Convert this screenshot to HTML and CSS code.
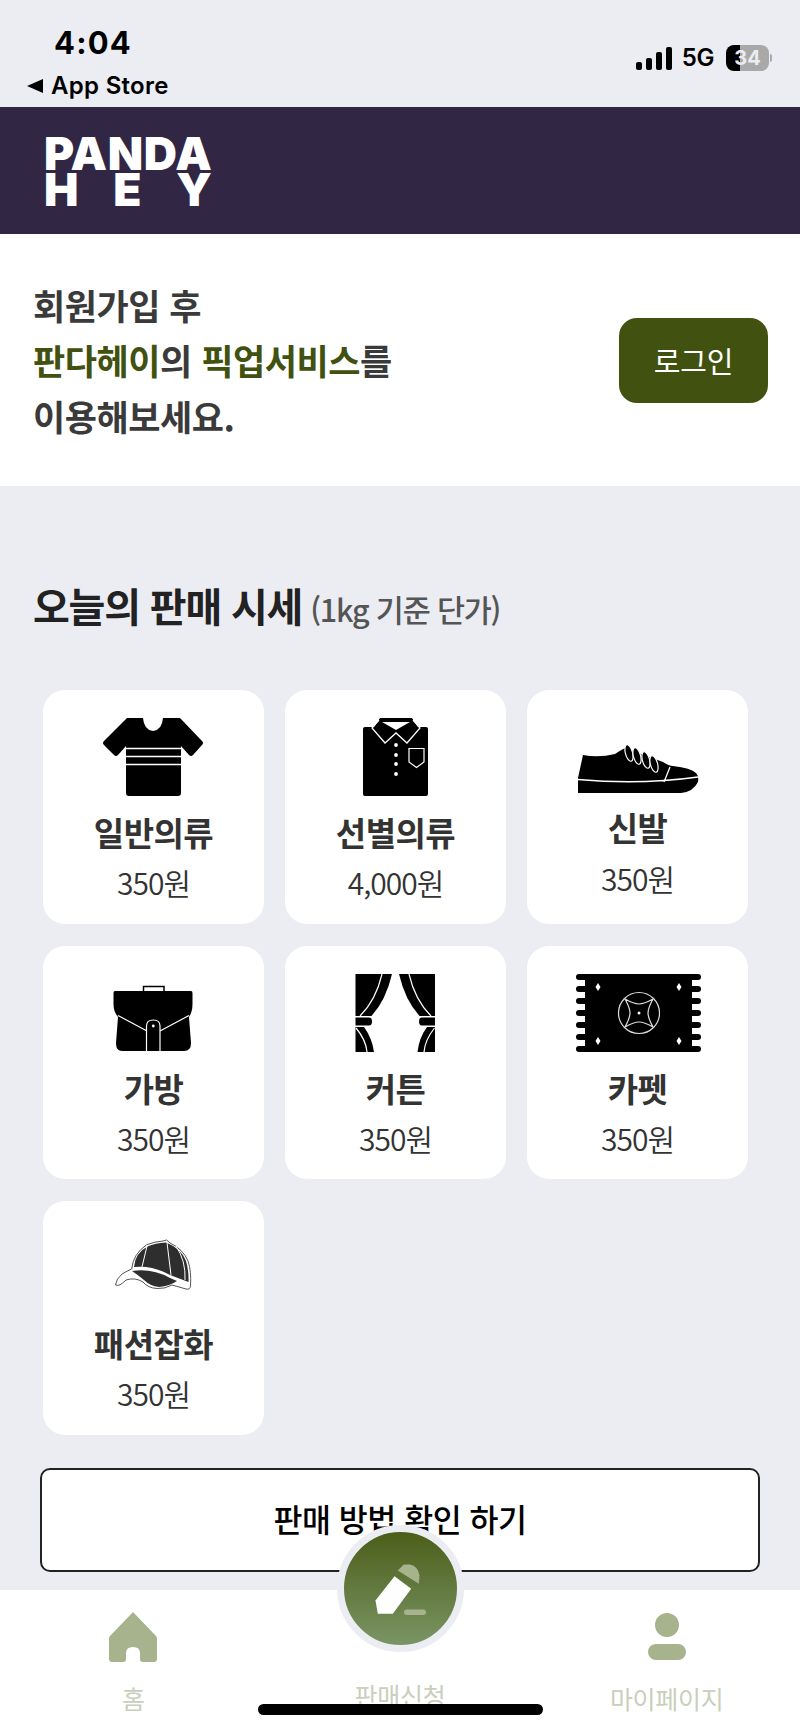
FILE: index.html
```html
<!DOCTYPE html>
<html lang="ko">
<head>
<meta charset="utf-8">
<title>판다헤이</title>
<link rel="stylesheet" href="styles.css">
</head>
<body>
<div class="page">
  <div class="status">
    <div class="status-left">
      <div class="time">4:04</div>
      <div class="back"><span class="back-arrow"></span><span>App Store</span></div>
    </div>
    <div class="status-right">
      <div class="signal"><i class="s1"></i><i class="s2"></i><i class="s3"></i><i class="s4"></i></div>
      <span class="net">5G</span>
      <div class="battery"><div class="battery-body"><span class="battery-num">34</span></div><span class="battery-tip"></span></div>
    </div>
  </div>

  <header class="brand">
    <div class="logo">
      <div class="logo-top">PANDA</div>
      <div class="logo-bottom"><span>H</span><span>E</span><span>Y</span></div>
    </div>
  </header>

  <section class="promo">
    <p class="promo-text">회원가입 후<br><b>판다헤이</b>의 <b>픽업서비스</b>를<br>이용해보세요.</p>
    <button class="login">로그인</button>
  </section>

  <h2 class="title">오늘의 판매 시세 <small>(1kg 기준 단가)</small></h2>

  <div class="grid">
    <div class="card">
      <svg class="icon" viewBox="89 718 130 78">
        <path d="M127 718H180L202 741Q204 743 202 745L193 755Q191 757 189 755L181 746V793Q181 796 178 796H129Q126 796 126 793V746L118 755Q116 757 114 755L104 745Q102 743 104 741Z" fill="#000"/>
        <path d="M143 718H163Q162 730 153 731Q144 730 143 718Z" fill="#fff"/>
        <path d="M126 748.500H181M126 756.500H181M126 764.500H181" stroke="#fff" stroke-width="1.600" fill="none"/>
      </svg>
      <div class="name">일반의류</div>
      <div class="price">350원</div>
    </div>
    <div class="card">
      <svg class="icon" viewBox="331 718 130 78">
        <path d="M380 718H412L418 727H426Q428 727 428 729V794Q428 796 426 796H365Q363 796 363 794V729Q363 727 365 727H374Z" fill="#000"/>
        <path d="M382 722H410L396 730Z" fill="#fff"/>
        <path d="M379 720L372 728L385 743L396 733L407 743L420 728L413 720" stroke="#fff" stroke-width="1.300" fill="none"/>
        <circle cx="396" cy="745" r="1.900" fill="#fff"/><circle cx="396" cy="755" r="1.900" fill="#fff"/><circle cx="396" cy="764" r="1.900" fill="#fff"/><circle cx="396" cy="774" r="1.900" fill="#fff"/>
        <path d="M409 748.500H424V762L416.500 767.500L409 762Z" stroke="#fff" stroke-width="1.200" fill="none"/>
      </svg>
      <div class="name">선별의류</div>
      <div class="price">4,000원</div>
    </div>
    <div class="card card-short">
      <svg class="icon" viewBox="572 718 130 78">
        <path d="M582 755Q598 758 614 754Q620 750 624 748L662 762Q668 766 672 766Q690 768 695 773Q698 776 697 782Q692 792 680 793H577V778Z" fill="#000"/>
        <path d="M577 779.500Q640 785 697 777M669 767L663 782" stroke="#fff" stroke-width="1.300" fill="none"/>
        <g fill="#000" stroke="#fff" stroke-width="1.200">
          <ellipse cx="628" cy="753" rx="3.600" ry="8.500" transform="rotate(-15 628 753)"/>
          <ellipse cx="636" cy="756" rx="3.600" ry="8.500" transform="rotate(-15 636 756)"/>
          <ellipse cx="645" cy="760" rx="3.600" ry="8.500" transform="rotate(-15 645 760)"/>
          <ellipse cx="653" cy="764" rx="3.600" ry="8.500" transform="rotate(-15 653 764)"/>
        </g>
      </svg>
      <div class="name">신발</div>
      <div class="price">350원</div>
    </div>
    <div class="card">
      <svg class="icon" viewBox="89 974 130 78">
        <path d="M143.500 991V986.500H164V991" stroke="#000" stroke-width="1.500" fill="none"/>
        <path d="M115 991H191Q192.500 991 192.500 993V1004Q192.500 1012 189 1017L191 1043Q191 1051 184 1051H122Q116 1051 116 1043L118 1017Q113.500 1012 113.500 1004V993Q113.500 991 115 991Z" fill="#000"/>
        <path d="M118 1015.500L147 1031M189 1015.500L160 1031M146.500 1051V1026Q146.500 1020 153.300 1020Q160 1020 160 1026V1051" stroke="#fff" stroke-width="1.200" fill="none"/>
        <circle cx="153.300" cy="1026" r="1.400" fill="#fff"/>
      </svg>
      <div class="name">가방</div>
      <div class="price">350원</div>
    </div>
    <div class="card">
      <svg class="icon" viewBox="331 974 130 78">
        <path d="M355.500 974H392Q386 1000 371.500 1016H355.500Z" fill="#000"/>
        <path d="M355.500 1025.500V1017.500H369Q372 1017.500 372 1021.500Q372 1025.500 369 1025.500Z" fill="#000"/>
        <path d="M355.500 1027H364Q372 1038 374 1052H355.500Z" fill="#000"/>
        <path d="M382 974Q376 1000 360 1016M356 1028Q366 1040 367 1052" stroke="#fff" stroke-width="1.200" fill="none"/>
        <path d="M435 974H399Q405 1000 419.500 1016H435Z" fill="#000"/>
        <path d="M435 1025.500H422Q419 1025.500 419 1021.500Q419 1017.500 422 1017.500H435Z" fill="#000"/>
        <path d="M435 1027H427Q419 1038 417.500 1052H435Z" fill="#000"/>
        <path d="M409 974Q415 1000 431 1016M434.500 1028Q425 1040 424 1052" stroke="#fff" stroke-width="1.200" fill="none"/>
      </svg>
      <div class="name">커튼</div>
      <div class="price">350원</div>
    </div>
    <div class="card">
      <svg class="icon" viewBox="572 974 130 78">
        <rect x="584" y="974" width="107" height="78" fill="#000"/>
        <g fill="#000">
          <rect x="575" y="974" width="14" height="6" rx="3"/><rect x="575" y="986" width="14" height="6" rx="3"/><rect x="575" y="998" width="14" height="6" rx="3"/><rect x="575" y="1010" width="14" height="6" rx="3"/><rect x="575" y="1022" width="14" height="6" rx="3"/><rect x="575" y="1034" width="14" height="6" rx="3"/><rect x="575" y="1046" width="14" height="6" rx="3"/>
          <rect x="686" y="974" width="14" height="6" rx="3"/><rect x="686" y="986" width="14" height="6" rx="3"/><rect x="686" y="998" width="14" height="6" rx="3"/><rect x="686" y="1010" width="14" height="6" rx="3"/><rect x="686" y="1022" width="14" height="6" rx="3"/><rect x="686" y="1034" width="14" height="6" rx="3"/><rect x="686" y="1046" width="14" height="6" rx="3"/>
        </g>
        <circle cx="638" cy="1013" r="20.500" fill="none" stroke="#ddd" stroke-width="1.200"/>
        <path d="M624 999Q633 1004 638 1004Q643 1004 652 999Q647 1008 647 1013Q647 1018 652 1027Q643 1022 638 1022Q633 1022 624 1027Q629 1018 629 1013Q629 1008 624 999Z" fill="none" stroke="#ddd" stroke-width="1.200"/>
        <circle cx="638" cy="1013" r="1.500" fill="#fff"/>
        <path d="M597 983L599.500 987L597 991L594.500 987ZM678 983L680.500 987L678 991L675.500 987ZM597 1037L599.500 1041L597 1045L594.500 1041ZM678 1037L680.500 1041L678 1045L675.500 1041Z" fill="#fff"/>
      </svg>
      <div class="name">카펫</div>
      <div class="price">350원</div>
    </div>
    <div class="card">
      <svg class="icon" viewBox="89 1230 130 78">
        <path d="M115.500 1286Q116 1280 122 1275Q127 1272 131.700 1270Q133 1255 146.700 1245.700Q155 1242.500 163 1242L166.700 1241L170 1244Q183 1250 188 1262Q191.500 1272 190.500 1287Q190 1291 186 1290L172 1286Q165 1290 157 1289.500Q148 1289 143 1283Q135 1278 126 1281Q119 1288 116 1286Z" fill="#fff" stroke="#555" stroke-width="1"/>
        <path d="M134 1268Q135 1254 147.500 1247.500Q155 1244 166 1243.500Q182 1250 186 1262Q189 1272 188.500 1283L170 1276Q152 1266 134 1268Z" fill="#2e2e2e"/>
        <path d="M147 1247L142 1268M167 1243.500L171 1276M176 1247Q186 1262 185 1281" stroke="#fff" stroke-width="1" fill="none"/>
        <path d="M132 1272Q152 1269 170 1279L177 1282Q170 1287 159 1288Q150 1287 144 1281Q138 1276 132 1272Z" fill="#2e2e2e"/>
      </svg>
      <div class="name">패션잡화</div>
      <div class="price">350원</div>
    </div>
  </div>

  <button class="guide">판매 방법 확인 하기</button>

  <nav class="tabs">
    <div class="tab">
      <svg class="tab-icon" viewBox="0 0 48 50"><path d="M24 0L47 24Q48 25 48 27V47Q48 50 45 50H34Q31 50 31 47V41Q31 35 24 35Q17 35 17 41V47Q17 50 14 50H3Q0 50 0 47V27Q0 25 1 24Z" fill="#a6b38d"/></svg>
      <span class="tab-label">홈</span>
    </div>
    <div class="tab tab-mid">
      <span class="tab-label">판매신청</span>
      <div class="fab">
        <svg class="fab-icon" viewBox="0 0 60 60"><path d="M23.500 17.200L40.200 29.800L21.800 54.800H6.800L4.500 41.500Z" fill="#fff"/><path d="M26.800 11.500L32.800 5.500H39Q47 7 48.500 16.500L47.800 24.800Z" fill="#a6b38d"/><rect x="33" y="50.500" width="22" height="5.500" rx="2.750" fill="#a6b38d"/></svg>
      </div>
    </div>
    <div class="tab">
      <svg class="tab-icon" viewBox="0 0 48 50"><circle cx="24" cy="13" r="12" fill="#a6b38d"/><rect x="5" y="32" width="38" height="16" rx="8" fill="#a6b38d"/></svg>
      <span class="tab-label">마이페이지</span>
    </div>
    <div class="home-bar"></div>
  </nav>
</div>
</body>
</html>
```
FILE: styles.css
```css
* { box-sizing: border-box; }
html, body { margin: 0; padding: 0; }
body {
  background: #ebedf3;
  font-family: "Noto Sans CJK KR", "Noto Sans", sans-serif;
  color: #333;
}
.page { width: 800px; height: 1732px; overflow: hidden; display: flex; flex-direction: column; }

.status { height: 107px; display: flex; justify-content: space-between; flex-shrink: 0; }
.status-left { padding: 27px 0 0 27px; }
.time { margin-left: 27px; font: 700 31px/32px "Inter", sans-serif; letter-spacing: 1.2px; color: #000; }
.back { margin-top: 13px; display: flex; align-items: center; gap: 8px; font: 600 24px/28px "Inter", sans-serif; letter-spacing: .3px; color: #000; }
.back-arrow { width: 0; height: 0; border-style: solid; border-width: 7px 16px 7px 0; border-color: transparent #000 transparent transparent; }
.status-right { display: flex; align-items: center; height: 26px; margin: 45px 28px 0 0; }
.signal { display: flex; align-items: flex-end; gap: 4px; height: 23px; margin-right: 10px; }
.signal i { display: block; width: 6px; border-radius: 2px; background: #000; }
.s1 { height: 8px; } .s2 { height: 12px; } .s3 { height: 18px; } .s4 { height: 23px; }
.net { font: 600 24px/26px "Inter", sans-serif; color: #000; margin-right: 12px; letter-spacing: -.4px; }
.battery { display: flex; align-items: center; gap: 1px; }
.battery-body { width: 43px; height: 26px; border-radius: 8px; background: linear-gradient(90deg, #000 0 33%, #a9a9a9 33% 100%); display: flex; align-items: center; justify-content: center; }
.battery-num { font: 700 20px/26px "Inter", sans-serif; color: #ebedf3; }
.battery-tip { width: 2px; height: 8px; border-radius: 0 2px 2px 0; background: #a9a9a9; }

.brand { height: 127px; background: #312744; padding: 30px 0 0 44px; flex-shrink: 0; }
.logo { width: 168px; color: #fff; font-family: "Inter", "Liberation Sans", sans-serif; font-weight: 900; }
.logo-top { font-size: 46px; line-height: 33px; height: 35px; letter-spacing: .6px; white-space: nowrap; }
.logo-bottom { display: flex; justify-content: space-between; font-size: 46px; line-height: 34px; height: 34px; }

.promo { height: 252px; background: #fff; display: flex; align-items: center; justify-content: space-between; padding: 0 32px 0 33px; flex-shrink: 0; }
.promo-text { margin: 0; font-size: 35px; line-height: 55.500px; font-weight: 700; letter-spacing: -.450px; color: #3a3a3a; }
.promo-text b { font-weight: 700; color: #41510f; }
.login { width: 149px; height: 85px; border: 0; border-radius: 18px; background: #41510f; color: #fff; font: 400 29px "Noto Sans CJK KR", sans-serif; letter-spacing: -.2px; }

.title { height: 40px; margin: 99px 0 65px 33px; font-size: 40px; line-height: 40px; font-weight: 700; letter-spacing: -1.200px; color: #222; flex-shrink: 0; white-space: nowrap; }
.title small { margin-left: -2px; font-size: 30.500px; line-height: 1; font-weight: 500; color: #555; letter-spacing: -1.200px; }

.grid { display: grid; grid-template-columns: repeat(3, 221px); grid-auto-rows: 233.500px; gap: 22px 21px; padding-left: 43px; flex-shrink: 0; }
.card { background: #fff; border-radius: 22px; padding-top: 28px; display: flex; flex-direction: column; align-items: center; }
.icon { display: block; width: 130px; height: 78px; flex-shrink: 0; }
.name { margin-top: 14px; font-size: 33px; line-height: 44px; font-weight: 700; letter-spacing: -.5px; color: #333; }
.price { margin-top: 8px; font-size: 30px; line-height: 40px; font-weight: 350; letter-spacing: -1px; color: #333; }
.card-short .name { margin-top: 9px; }
.card-short .price { margin-top: 9px; }

.guide { margin: 33.500px 0 0 40px; width: 720px; height: 104px; background: #fff; border: 2px solid #222; border-radius: 10px; color: #000; font: 500 31.500px "Noto Sans CJK KR", sans-serif; letter-spacing: -.5px; padding: 0 0 4px; flex-shrink: 0; }

.tabs { position: relative; margin-top: 18px; height: 142px; background: #fff; display: grid; grid-template-columns: repeat(3, 1fr); flex-shrink: 0; }
.tab { display: flex; flex-direction: column; align-items: center; padding-top: 22px; }
.tab-icon { display: block; width: 48px; height: 50px; }
.tab-label { margin-top: 18px; font-size: 25px; line-height: 36px; color: #c9cebd; letter-spacing: -.3px; }
.tab-mid { padding-top: 87px; }
.tab-mid .tab-label { margin-top: 0; }
.fab { position: absolute; left: 337px; top: -65px; width: 127px; height: 127px; border-radius: 50%; border: 7px solid #ebedf3; background: linear-gradient(180deg, #4b5e19, #7a9565); display: flex; align-items: center; justify-content: center; }
.fab-icon { display: block; width: 60px; height: 60px; }
.home-bar { position: absolute; left: 258px; top: 114px; width: 285px; height: 11px; border-radius: 6px; background: #000; }
```
